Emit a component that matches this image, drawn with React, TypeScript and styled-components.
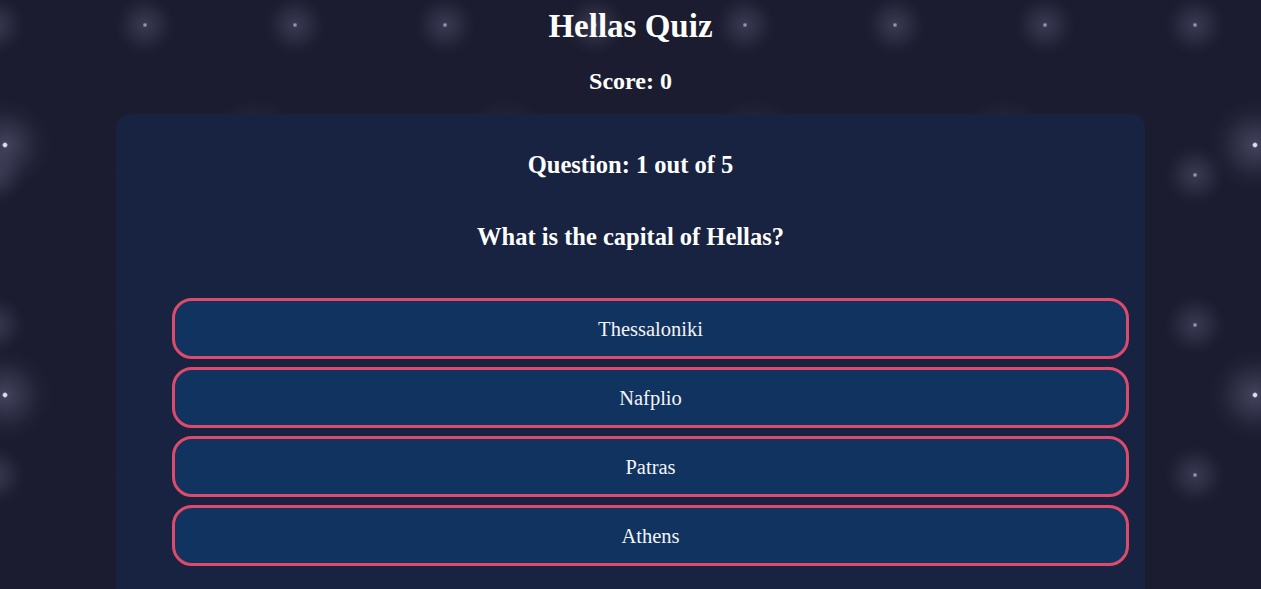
import styled, { createGlobalStyle } from "styled-components";

// quiz data for the first question
const question = {
    text: "What is the capital of Hellas?",
    answers: ["Thessaloniki", "Nafplio", "Patras", "Athens"],
};

const GlobalStyle = createGlobalStyle`
  html, body {
    margin: 0;
    padding: 0;
    background: #1b1c2f;
  }
  body {
    font-family: "Liberation Serif", "Times New Roman", serif;
    color: #ffffff;
  }
`;

export default function App() {
    return (
        <Page>
            <GlobalStyle />
            <Title>Hellas Quiz</Title>
            <Score>Score: 0</Score>

            <Card>
                <Counter>Question: 1 out of 5</Counter>
                <Prompt>{question.text}</Prompt>

                {/* answer buttons */}
                <Answers>
                    {question.answers.map((a) => (
                        <li key={a}>
                            <AnswerButton>{a}</AnswerButton>
                        </li>
                    ))}
                </Answers>
            </Card>
        </Page>
    );
}

const Page = styled.main`
  min-height: 100vh;
  overflow: hidden;
  display: flex;
  flex-direction: column;
  align-items: center;
  background-color: #1b1c2f;
  background-image:
    radial-gradient(circle, rgba(235, 235, 255, 0.95) 0 1.5px, rgba(110, 108, 140, 0.45) 3px, rgba(90, 88, 118, 0.3) 20px, rgba(70, 68, 95, 0.12) 34px, transparent 46px),
    radial-gradient(circle, rgba(200, 200, 225, 0.7) 0 1px, rgba(100, 98, 130, 0.38) 2.5px, rgba(85, 83, 112, 0.25) 15px, rgba(70, 68, 95, 0.1) 24px, transparent 30px);
  background-size: 250px 250px, 150px 150px;
  background-position: -120px 20px, 70px -50px;
`;

const Title = styled.h1`
  margin: 9px 0 0;
  font-size: 33px;
  font-weight: bold;
  line-height: 35px;
`;

const Score = styled.h2`
  margin: 24px 0 0;
  font-size: 24px;
  font-weight: bold;
  line-height: 27px;
`;

const Card = styled.section`
  box-sizing: border-box;
  width: 1029px;
  margin-top: 19px;
  padding: 16px 16px 60px;
  background: #182341;
  border-radius: 14px;
  text-align: center;
`;

const Counter = styled.h3`
  margin: 21px 0 0;
  font-size: 24.5px;
  font-weight: bold;
  line-height: 27px;
`;

const Prompt = styled.h3`
  margin: 45px 0 0;
  font-size: 24.5px;
  font-weight: bold;
  line-height: 27px;
`;

const Answers = styled.ul`
  list-style: none;
  margin: 48px 0 0;
  padding: 0 0 0 40px;
  display: flex;
  flex-direction: column;
  gap: 8px;
`;

const AnswerButton = styled.button`
  box-sizing: border-box;
  width: 100%;
  height: 61px;
  padding: 2px 0 0;
  background: #10335f;
  border: 3px solid #de4a6c;
  border-radius: 20px;
  color: #f4f4f8;
  font-family: "Liberation Serif", "Times New Roman", serif;
  font-size: 20.5px;
  cursor: pointer;
`;
